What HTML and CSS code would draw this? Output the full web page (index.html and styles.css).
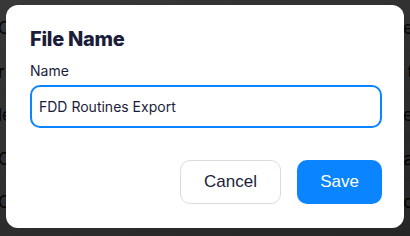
FILE: index.html
```html
<!DOCTYPE html>
<html lang="en">
<head>
    <meta charset="UTF-8">
    <meta name="viewport" content="width=device-width,initial-scale=1">
    <title>File Name</title>
    <link rel="stylesheet" href="styles.css">
</head>
<body>
<!-- Page behind the modal -->
<main class="page">
    <div class="row"><span>Co</span><span>e</span></div>
    <div class="row"><span>r</span><span>t</span></div>
    <div class="row"><span>le</span><span>e</span></div>
    <div class="row"><span>C</span><span>a</span></div>
    <div class="row"><span>C</span><span>c</span></div>
</main>

<div class="backdrop"></div>

<!-- File name modal -->
<section class="modal" role="dialog" aria-labelledby="modal-title">
    <h2 id="modal-title">File Name</h2>
    <label for="file-name">Name</label>
    <input id="file-name" type="text" value="FDD Routines Export">
    <div class="actions">
        <button class="btn btn-ghost">Cancel</button>
        <button class="btn btn-primary">Save</button>
    </div>
</section>
</body>
</html>
```

FILE: styles.css
```css
:root{
    --c-accent:#0a84ff;
    --c-text:#1b1d3a;
    --c-border:#dcdcdc;
    --radius:10px;
}
*{box-sizing:border-box;margin:0;padding:0}
html,body{height:100%}
body{background:#e9e9e9;font-family:Inter,"Noto Sans",sans-serif;overflow:hidden}

.page{height:100%;overflow:hidden;padding-top:7px}
.row{height:43.5px;display:flex;align-items:center;justify-content:space-between;border-bottom:1px solid #d8d8d8;font-size:17px;color:#111}
.row span:first-child{margin-left:-2px}
.row span:last-child{margin-right:-3px}

.backdrop{position:fixed;inset:0;background:linear-gradient(160deg,rgba(0,0,0,.76),rgba(0,0,0,.84))}

.modal{
    position:fixed;left:6px;top:5px;width:398px;height:223px;
    background:#fff;border-radius:12px;
    padding:22px 22px 24px 24px;
    display:flex;flex-direction:column;
}
.modal h2{font-size:20px;line-height:24px;font-weight:800;color:var(--c-text);letter-spacing:-.3px}
.modal label{margin-top:11px;font-size:14px;line-height:17px;color:var(--c-text)}
.modal input{
    margin-top:6px;height:43px;width:100%;
    border:2px solid var(--c-accent);border-radius:var(--radius);
    padding:0 7px;font:14px Inter,sans-serif;color:var(--c-text);outline:none;
}
.actions{margin-top:auto;display:flex;justify-content:flex-end;gap:16px}
.btn{height:44px;border-radius:var(--radius);font:17px "Liberation Sans",Arial,sans-serif;cursor:pointer}
.btn-ghost{width:101px;background:#fff;border:1px solid var(--c-border);color:var(--c-text)}
.btn-primary{width:85px;background:var(--c-accent);border:none;color:#fff}
```
